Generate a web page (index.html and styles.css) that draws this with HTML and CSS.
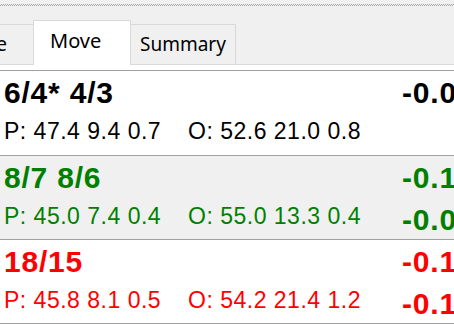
FILE: index.html
```html
<!DOCTYPE html>
<html lang="en">
<head>
    <meta charset="UTF-8">
    <meta name="viewport" content="width=device-width, initial-scale=1.0">
    <title>Move analysis</title>
    <link rel="stylesheet" href="styles.css">
</head>
<body>

    <div class="tabbar">
        <div class="dots"></div>
        <div class="tab tab-first">Cube</div>
        <div class="tab tab-move active">Move</div>
        <div class="tab tab-summary">Summary</div>
    </div>

    <div class="page">
        <div class="list">
            <div class="row">
                <div class="move">6/4* 4/3</div>
                <div class="eq">-0.0</div>
                <div class="stats"><span class="p">P: 47.4 9.4 0.7</span><span>O: 52.6 21.0 0.8</span></div>
            </div>
            <div class="row good">
                <div class="move">8/7 8/6</div>
                <div class="eq">-0.1</div>
                <div class="stats"><span class="p">P: 45.0 7.4 0.4</span><span>O: 55.0 13.3 0.4</span></div>
                <div class="eq">-0.0</div>
            </div>
            <div class="row bad">
                <div class="move">18/15</div>
                <div class="eq">-0.1</div>
                <div class="stats"><span class="p">P: 45.8 8.1 0.5</span><span>O: 54.2 21.4 1.2</span></div>
                <div class="eq">-0.1</div>
            </div>
        </div>
    </div>

</body>
</html>
```

FILE: styles.css
```css
body {
    margin: 0;
    width: 454px;
    height: 324px;
    overflow: hidden;
    background-color: #ffffff;
    font-family: 'Liberation Sans', Arial, sans-serif;
}

/* tabs */

.tabbar {
    position: relative;
    display: flex;
    align-items: flex-end;
    height: 64px;
    background-color: #f0f0f0;
    border-bottom: 1px solid #d9d9d9;
}

.dots {
    position: absolute;
    top: 4px;
    left: 0;
    right: 0;
    height: 2px;
    background: repeating-conic-gradient(#a8a8a8 0 25%, transparent 0 50%) 0 0 / 2px 2px;
}

.tab {
    box-sizing: border-box;
    height: 40px;
    padding-top: 9px;
    border: 1px solid #d9d9d9;
    border-bottom: none;
    background-color: #f0f0f0;
    font-family: 'Noto Sans', sans-serif;
    font-size: 19px;
    line-height: 20px;
    color: #000000;
    white-space: nowrap;
}

.tab-first {
    width: 101px;
    margin-left: -67px;
    padding-right: 26px;
    text-align: right;
}

.tab-move {
    width: 98px;
    margin-left: -1px;
    padding-left: 16px;
    font-size: 20px;
}

.tab-summary {
    width: 106px;
    margin-left: -1px;
    padding-left: 9px;
}

.tab.active {
    position: relative;
    z-index: 1;
    height: 45px;
    padding-top: 10px;
    margin-bottom: -1px;
    background-color: #ffffff;
}

/* move list */

.page {
    padding-top: 5px;
    background-color: #ffffff;
}

.list {
    border-top: 1px solid #a0a0a0;
}

.row {
    box-sizing: border-box;
    display: grid;
    grid-template-columns: 1fr 52px;
    grid-template-rows: 32px 32px;
    row-gap: 10px;
    height: 84px;
    padding: 6px 0 0 4px;
    border-bottom: 1px solid #a0a0a0;
    color: #000000;
    white-space: nowrap;
}

.row:first-child {
    height: 85px;
}

.row.good {
    background-color: #f0f0f0;
    color: #008000;
}

.row.bad {
    color: #ff0000;
}

.move,
.eq {
    font-size: 30px;
    line-height: 32px;
    font-weight: bold;
    letter-spacing: 0.8px;
}

.stats {
    display: flex;
    font-size: 23px;
    line-height: 24px;
    letter-spacing: 0.5px;
}

.stats .p {
    width: 184px;
}
```
